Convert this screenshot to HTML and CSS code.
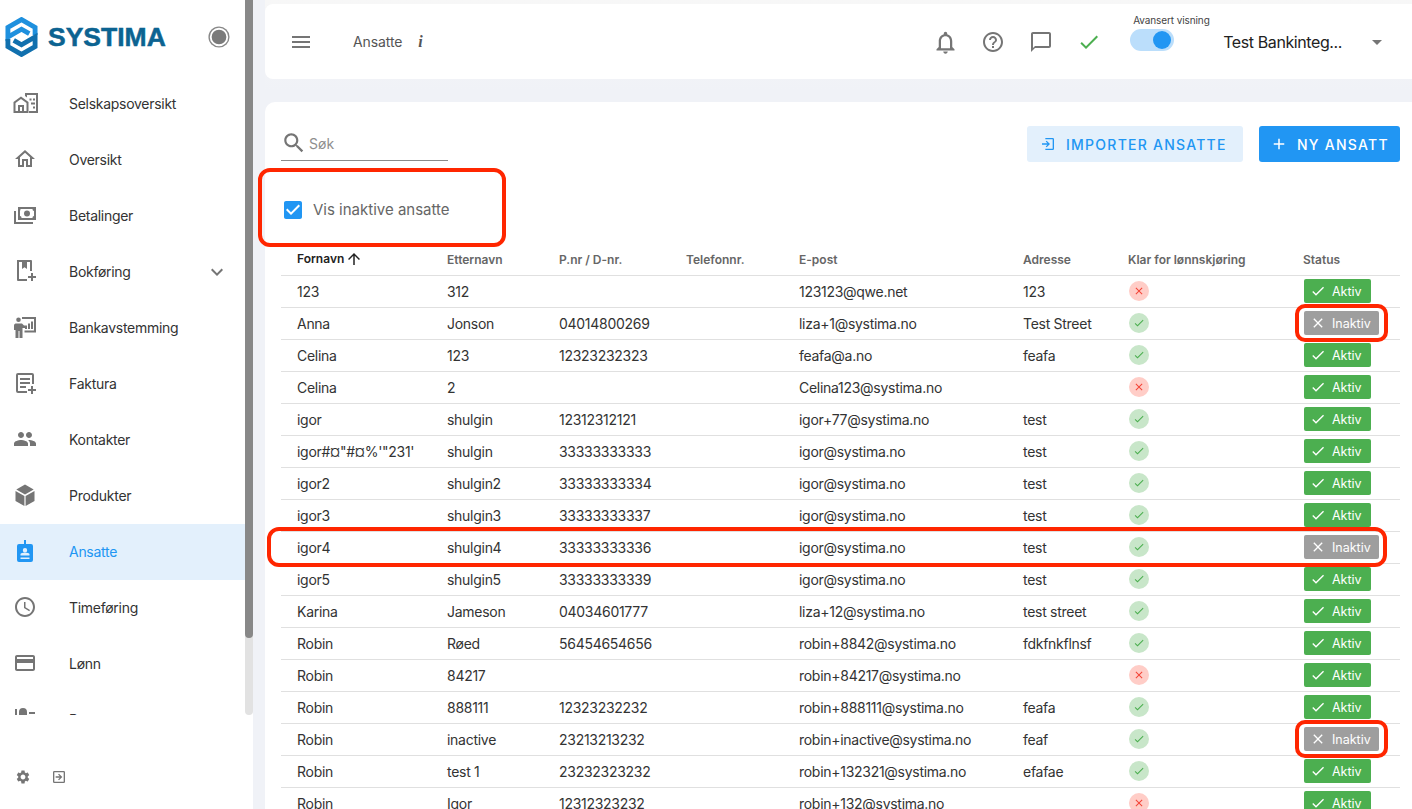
FILE: index.html
```html
<!DOCTYPE html>
<html lang="no">
<head>
<meta charset="utf-8">
<title>Systima – Ansatte</title>
<link rel="stylesheet" href="styles.css">
</head>
<body>
<svg class="sprite" aria-hidden="true">
  <symbol id="i-home" viewBox="0 0 24 24"><path d="M12 5.69l5 4.5V18h-2v-6H9v6H7v-7.81l5-4.5M12 3L2 12h3v8h6v-6h2v6h6v-8h3L12 3z"/></symbol>
  <symbol id="i-company" viewBox="0 0 26 24"><path d="M12 2h13v20h-9v-2h7V4H14v2.500l-2-1.400zM16.500 7.500h2v2h-2zM20 7.500h2v2h-2zM18 11.500h2v2h-2zM20 11.500h2v2h-2zM20 15.500h2v2h-2z"/><path d="M8 5.500l7.500 5.500v11H.5V11zM8 8l-5.500 4v8H5v-6h6v6h2.500v-8zM7 16v4h2v-4z" fill-rule="evenodd"/></symbol>
  <symbol id="i-money" viewBox="0 0 24 24"><path d="M5 4h18v13H5zM7.500 6C7.500 7.500 6.800 8 7 8v5c1 0 1.500.8 1.500 2h11c0-1.200.5-2 1.500-2V8c-1 0-1.500-.8-1.500-2zM14 7.500a3 3 0 1 1 0 6 3 3 0 0 1 0-6zM1 8h2v11h17v2H1z" fill-rule="evenodd"/></symbol>
  <symbol id="i-book" viewBox="0 0 24 24"><path d="M4 1h14a1 1 0 0 1 1 1v10h-2V3h-3v7l-2.500-1.800L9 10V3H6v17h8v2H5a1 1 0 0 1-1-1zM18 14h2v3h3v2h-3v3h-2v-3h-3v-2h3z"/></symbol>
  <symbol id="i-bank" viewBox="0 0 24 24"><path d="M5.500 2.500a2.300 2.300 0 1 1 0 4.600 2.300 2.300 0 0 1 0-4.600zM2.500 8.500H9l2 2h2.500v2.500H9.500v10H6.500v-7h-1v7h-3v-8H1v-4.500a2 2 0 0 1 1.500-2zM9 2h14v15.500H11.500v-2H21V4H9zM12 10.500h2V14h-2zM15 8.500h2V14h-2zM18 6.500h2V14h-2z"/></symbol>
  <symbol id="i-invoice" viewBox="0 0 24 24"><path d="M5 2h14a2 2 0 0 1 2 2v9h-2V4H5v16h9v2H5a2 2 0 0 1-2-2V4a2 2 0 0 1 2-2zM7 7h10v2H7zM7 11h10v2H7zM7 15h6v2H7zM18 15h2v3h3v2h-3v3h-2v-3h-3v-2h3z"/></symbol>
  <symbol id="i-people" viewBox="0 0 24 24"><path d="M16 11c1.660 0 2.990-1.340 2.990-3S17.660 5 16 5c-1.660 0-3 1.340-3 3s1.340 3 3 3zm-8 0c1.660 0 2.990-1.340 2.990-3S9.660 5 8 5C6.340 5 5 6.340 5 8s1.340 3 3 3zm0 2c-2.330 0-7 1.170-7 3.500V19h14v-2.500c0-2.330-4.670-3.500-7-3.500zm8 0c-.29 0-.62.02-.97.05 1.160.84 1.970 1.970 1.970 3.450V19h6v-2.500c0-2.330-4.670-3.500-7-3.500z"/></symbol>
  <symbol id="i-box" viewBox="0 0 24 24"><path d="M12 1.500l8.700 5-8.700 5-8.700-5zM2.500 8l8.900 5.100V23l-8.900-5.100zM21.500 8l-8.900 5.100V23l8.900-5.100z"/></symbol>
  <symbol id="i-badge" viewBox="0 0 24 24"><path d="M11 1h2v4h5a2 2 0 0 1 2 2v14a2 2 0 0 1-2 2H6a2 2 0 0 1-2-2V7a2 2 0 0 1 2-2h5zM12 9a2.200 2.200 0 1 0 0 4.400A2.200 2.200 0 0 0 12 9zM7.500 15v1.500h9V15c0-.9-2.500-1.200-4.500-1.200S7.500 14.100 7.500 15zM7.500 18.500v1.500h9v-1.500z" fill-rule="evenodd"/></symbol>
  <symbol id="i-clock" viewBox="0 0 24 24"><path d="M11.990 2C6.470 2 2 6.480 2 12s4.470 10 9.990 10C17.520 22 22 17.520 22 12S17.520 2 11.990 2zM12 20c-4.420 0-8-3.580-8-8s3.580-8 8-8 8 3.580 8 8-3.580 8-8 8zm.5-13H11v6l5.250 3.150.75-1.230-4.500-2.670z"/></symbol>
  <symbol id="i-card" viewBox="0 0 24 24"><path d="M20 4H4c-1.110 0-1.990.89-1.990 2L2 18c0 1.110.89 2 2 2h16c1.110 0 2-.89 2-2V6c0-1.110-.89-2-2-2zm0 14H4v-6h16v6zm0-10H4V6h16v2z"/></symbol>
  <symbol id="i-report" viewBox="0 0 24 24"><path d="M2 2h2v8H2zM10 1a4 4 0 0 1 4 4v3H6V5a4 4 0 0 1 4-4zM16 5h6v2h-6z"/></symbol>
  <symbol id="i-gear" viewBox="0 0 24 24"><path d="M19.140 12.940c.04-.3.06-.61.06-.94 0-.32-.02-.64-.07-.94l2.030-1.580c.18-.14.23-.41.12-.61l-1.920-3.320c-.12-.22-.37-.29-.59-.22l-2.390.96c-.5-.38-1.030-.7-1.620-.94l-.36-2.540c-.04-.24-.24-.41-.48-.41h-3.840c-.24 0-.43.17-.47.41l-.36 2.540c-.59.24-1.130.57-1.620.94l-2.390-.96c-.22-.08-.47 0-.59.22L2.740 8.870c-.12.21-.08.47.12.61l2.030 1.580c-.05.3-.09.63-.09.94s.02.64.07.94l-2.030 1.580c-.18.14-.23.41-.12.61l1.920 3.320c.12.22.37.29.59.22l2.390-.96c.5.38 1.030.7 1.620.94l.36 2.540c.05.24.24.41.48.41h3.840c.24 0 .44-.17.47-.41l.36-2.540c.59-.24 1.130-.56 1.620-.94l2.390.96c.22.08.47 0 .59-.22l1.920-3.320c.12-.22.07-.47-.12-.61l-2.010-1.580zM12 15.600c-1.980 0-3.600-1.620-3.600-3.600s1.620-3.600 3.600-3.600 3.600 1.620 3.600 3.600-1.620 3.600-3.600 3.600z"/></symbol>
  <symbol id="i-exit" viewBox="0 0 24 24"><path d="M5 3h14a2 2 0 0 1 2 2v14a2 2 0 0 1-2 2H5a2 2 0 0 1-2-2V5a2 2 0 0 1 2-2zm0 2v14h14V5zM7 11h6.200l-2.600-2.600L12 7l5 5-5 5-1.400-1.400 2.600-2.600H7z" fill-rule="evenodd"/></symbol>
  <symbol id="i-import" viewBox="0 0 24 24"><path d="M8 3h11a2 2 0 0 1 2 2v14a2 2 0 0 1-2 2H8v-2h11V5H8zM3 11h8.200L8.600 8.400 10 7l5 5-5 5-1.400-1.400 2.600-2.600H3z"/></symbol>
  <symbol id="i-menu" viewBox="0 0 24 24"><path d="M3 18h18v-2H3v2zm0-5h18v-2H3v2zm0-7v2h18V6H3z"/></symbol>
  <symbol id="i-bell" viewBox="0 0 24 24"><path d="M12 22c1.100 0 2-.9 2-2h-4c0 1.100.9 2 2 2zm6-6v-5c0-3.070-1.630-5.640-4.500-6.320V4c0-.83-.67-1.500-1.500-1.500s-1.500.67-1.500 1.500v.68C7.640 5.360 6 7.920 6 11v5l-2 2v1h16v-1l-2-2zm-2 1H8v-6c0-2.480 1.510-4.500 4-4.500s4 2.020 4 4.500v6z"/></symbol>
  <symbol id="i-help" viewBox="0 0 24 24"><path d="M11 18h2v-2h-2v2zm1-16C6.480 2 2 6.480 2 12s4.480 10 10 10 10-4.480 10-10S17.520 2 12 2zm0 18c-4.410 0-8-3.590-8-8s3.590-8 8-8 8 3.590 8 8-3.590 8-8 8zm0-14c-2.210 0-4 1.790-4 4h2c0-1.100.9-2 2-2s2 .9 2 2c0 2-3 1.750-3 5h2c0-2.250 3-2.500 3-5 0-2.210-1.790-4-4-4z"/></symbol>
  <symbol id="i-chat" viewBox="0 0 24 24"><path d="M20 2H4c-1.100 0-2 .9-2 2v18l4-4h14c1.100 0 2-.9 2-2V4c0-1.100-.9-2-2-2zm0 14H6l-2 2V4h16v12z"/></symbol>
  <symbol id="i-check" viewBox="0 0 24 24"><path d="M9 16.170L4.830 12l-1.420 1.410L9 19 21 7l-1.410-1.410z"/></symbol>
  <symbol id="i-close" viewBox="0 0 24 24"><path d="M19 6.410L17.590 5 12 10.590 6.410 5 5 6.410 10.590 12 5 17.590 6.410 19 12 13.410 17.590 19 19 17.590 13.410 12z"/></symbol>
  <symbol id="i-up" viewBox="0 0 24 24"><path d="M4 12l1.410 1.410L11 7.830V20h2V7.830l5.580 5.590L20 12l-8-8-8 8z"/></symbol>
  <symbol id="i-add" viewBox="0 0 24 24"><path d="M19 13h-6v6h-2v-6H5v-2h6V5h2v6h6v2z"/></symbol>
  <symbol id="i-more" viewBox="0 0 24 24"><path d="M16.590 8.590L12 13.170 7.410 8.590 6 10l6 6 6-6z"/></symbol>
  <symbol id="i-drop" viewBox="0 0 24 24"><path d="M7 10l5 5 5-5z"/></symbol>
  <symbol id="i-search" viewBox="0 0 24 24"><path d="M15.500 14h-.79l-.28-.27C15.410 12.590 16 11.110 16 9.500 16 5.910 13.090 3 9.500 3S3 5.910 3 9.500 5.910 16 9.500 16c1.610 0 3.090-.59 4.230-1.570l.27.28v.79l5 4.990L20.490 19l-4.990-5zm-6 0C7.010 14 5 11.990 5 9.500S7.010 5 9.500 5 14 7.010 14 9.500 11.990 14 9.500 14z"/></symbol>
  <symbol id="i-box-check" viewBox="0 0 24 24"><path d="M19 3H5c-1.110 0-2 .9-2 2v14c0 1.100.89 2 2 2h14c1.110 0 2-.9 2-2V5c0-1.100-.89-2-2-2zm-9 14l-5-5 1.410-1.410L10 14.170l7.590-7.590L19 8l-9 9z"/></symbol>
</svg>

<div class="app">
  <aside class="sidebar">
    <div class="side-scroll">
      <div class="side-content">
        <div class="brand">
          <svg class="logo-mark" viewBox="0 0 34 40">
            <path class="logo-a" d="M31 18V10L17 2 3 10V20L17 12 25 16.500"/>
            <path class="logo-b" d="M3 22V30L17 38 31 30V20L17 28 9 23.500"/>
          </svg>
          <span class="logo-text">SYSTIMA</span>
          <span class="radio-dot"></span>
        </div>
        <nav class="nav">
          <a class="nav-item"><svg class="nav-icon wide"><use href="#i-company"/></svg><span>Selskapsoversikt</span></a>
          <a class="nav-item"><svg class="nav-icon"><use href="#i-home"/></svg><span>Oversikt</span></a>
          <a class="nav-item"><svg class="nav-icon"><use href="#i-money"/></svg><span>Betalinger</span></a>
          <a class="nav-item"><svg class="nav-icon"><use href="#i-book"/></svg><span>Bokføring</span><svg class="nav-chevron"><use href="#i-more"/></svg></a>
          <a class="nav-item"><svg class="nav-icon"><use href="#i-bank"/></svg><span>Bankavstemming</span></a>
          <a class="nav-item"><svg class="nav-icon"><use href="#i-invoice"/></svg><span>Faktura</span></a>
          <a class="nav-item"><svg class="nav-icon"><use href="#i-people"/></svg><span>Kontakter</span></a>
          <a class="nav-item"><svg class="nav-icon"><use href="#i-box"/></svg><span>Produkter</span></a>
          <a class="nav-item active"><svg class="nav-icon"><use href="#i-badge"/></svg><span>Ansatte</span></a>
          <a class="nav-item"><svg class="nav-icon"><use href="#i-clock"/></svg><span>Timeføring</span></a>
          <a class="nav-item"><svg class="nav-icon"><use href="#i-card"/></svg><span>Lønn</span></a>
          <a class="nav-item"><svg class="nav-icon"><use href="#i-report"/></svg><span>Rapporter</span></a>
        </nav>
      </div>
      <div class="scrollbar"><div class="scroll-thumb"></div></div>
    </div>
    <div class="side-foot">
      <svg class="foot-gear"><use href="#i-gear"/></svg>
      <svg class="foot-exit"><use href="#i-exit"/></svg>
    </div>
  </aside>

  <main class="main">
    <header class="topbar">
      <svg class="menu-icon"><use href="#i-menu"/></svg>
      <span class="page-title">Ansatte</span>
      <span class="info-i">i</span>
      <div class="top-actions">
        <svg class="top-icon bell"><use href="#i-bell"/></svg>
        <svg class="top-icon"><use href="#i-help"/></svg>
        <svg class="top-icon"><use href="#i-chat"/></svg>
        <svg class="top-icon ok"><use href="#i-check"/></svg>
      </div>
      <div class="adv">
        <span class="adv-label">Avansert visning</span>
        <span class="switch"><span class="switch-knob"></span></span>
      </div>
      <span class="company">Test Bankinteg...</span>
      <svg class="company-drop"><use href="#i-drop"/></svg>
    </header>

    <section class="card">
      <div class="tools">
        <div class="search">
          <svg class="search-icon"><use href="#i-search"/></svg>
          <span class="search-text">Søk</span>
        </div>
        <div class="buttons">
          <button class="btn btn-soft"><svg class="btn-icon"><use href="#i-import"/></svg>IMPORTER ANSATTE</button>
          <button class="btn btn-solid"><svg class="btn-icon"><use href="#i-add"/></svg>NY ANSATT</button>
        </div>
      </div>
      <label class="check-row">
        <svg class="checkbox"><use href="#i-box-check"/></svg>
        <span>Vis inaktive ansatte</span>
      </label>
      <table class="table">
        <colgroup>
          <col class="c1"><col class="c2"><col class="c3"><col class="c4"><col class="c5"><col class="c6"><col class="c7"><col class="c8">
        </colgroup>
        <thead>
          <tr>
            <th class="sorted">Fornavn<svg class="sort-icon"><use href="#i-up"/></svg></th>
            <th>Etternavn</th><th>P.nr / D-nr.</th><th>Telefonnr.</th><th>E-post</th><th>Adresse</th><th>Klar for lønnskjøring</th><th>Status</th>
          </tr>
        </thead>
        <tbody>
          <tr><td>123</td><td>312</td><td></td><td></td><td>123123@qwe.net</td><td>123</td><td><span class="dot no"><svg><use href="#i-close"/></svg></span></td><td><span class="pill on"><svg><use href="#i-check"/></svg>Aktiv</span></td></tr>
          <tr><td>Anna</td><td>Jonson</td><td>04014800269</td><td></td><td>liza+1@systima.no</td><td>Test Street</td><td><span class="dot yes"><svg><use href="#i-check"/></svg></span></td><td><span class="pill off"><svg><use href="#i-close"/></svg>Inaktiv</span></td></tr>
          <tr><td>Celina</td><td>123</td><td>12323232323</td><td></td><td>feafa@a.no</td><td>feafa</td><td><span class="dot yes"><svg><use href="#i-check"/></svg></span></td><td><span class="pill on"><svg><use href="#i-check"/></svg>Aktiv</span></td></tr>
          <tr><td>Celina</td><td>2</td><td></td><td></td><td>Celina123@systima.no</td><td></td><td><span class="dot no"><svg><use href="#i-close"/></svg></span></td><td><span class="pill on"><svg><use href="#i-check"/></svg>Aktiv</span></td></tr>
          <tr><td>igor</td><td>shulgin</td><td>12312312121</td><td></td><td>igor+77@systima.no</td><td>test</td><td><span class="dot yes"><svg><use href="#i-check"/></svg></span></td><td><span class="pill on"><svg><use href="#i-check"/></svg>Aktiv</span></td></tr>
          <tr><td>igor#¤"#¤%'"231'</td><td>shulgin</td><td>33333333333</td><td></td><td>igor@systima.no</td><td>test</td><td><span class="dot yes"><svg><use href="#i-check"/></svg></span></td><td><span class="pill on"><svg><use href="#i-check"/></svg>Aktiv</span></td></tr>
          <tr><td>igor2</td><td>shulgin2</td><td>33333333334</td><td></td><td>igor@systima.no</td><td>test</td><td><span class="dot yes"><svg><use href="#i-check"/></svg></span></td><td><span class="pill on"><svg><use href="#i-check"/></svg>Aktiv</span></td></tr>
          <tr><td>igor3</td><td>shulgin3</td><td>33333333337</td><td></td><td>igor@systima.no</td><td>test</td><td><span class="dot yes"><svg><use href="#i-check"/></svg></span></td><td><span class="pill on"><svg><use href="#i-check"/></svg>Aktiv</span></td></tr>
          <tr><td>igor4</td><td>shulgin4</td><td>33333333336</td><td></td><td>igor@systima.no</td><td>test</td><td><span class="dot yes"><svg><use href="#i-check"/></svg></span></td><td><span class="pill off"><svg><use href="#i-close"/></svg>Inaktiv</span></td></tr>
          <tr><td>igor5</td><td>shulgin5</td><td>33333333339</td><td></td><td>igor@systima.no</td><td>test</td><td><span class="dot yes"><svg><use href="#i-check"/></svg></span></td><td><span class="pill on"><svg><use href="#i-check"/></svg>Aktiv</span></td></tr>
          <tr><td>Karina</td><td>Jameson</td><td>04034601777</td><td></td><td>liza+12@systima.no</td><td>test street</td><td><span class="dot yes"><svg><use href="#i-check"/></svg></span></td><td><span class="pill on"><svg><use href="#i-check"/></svg>Aktiv</span></td></tr>
          <tr><td>Robin</td><td>Røed</td><td>56454654656</td><td></td><td>robin+8842@systima.no</td><td>fdkfnkflnsf</td><td><span class="dot yes"><svg><use href="#i-check"/></svg></span></td><td><span class="pill on"><svg><use href="#i-check"/></svg>Aktiv</span></td></tr>
          <tr><td>Robin</td><td>84217</td><td></td><td></td><td>robin+84217@systima.no</td><td></td><td><span class="dot no"><svg><use href="#i-close"/></svg></span></td><td><span class="pill on"><svg><use href="#i-check"/></svg>Aktiv</span></td></tr>
          <tr><td>Robin</td><td>888111</td><td>12323232232</td><td></td><td>robin+888111@systima.no</td><td>feafa</td><td><span class="dot yes"><svg><use href="#i-check"/></svg></span></td><td><span class="pill on"><svg><use href="#i-check"/></svg>Aktiv</span></td></tr>
          <tr><td>Robin</td><td>inactive</td><td>23213213232</td><td></td><td>robin+inactive@systima.no</td><td>feaf</td><td><span class="dot yes"><svg><use href="#i-check"/></svg></span></td><td><span class="pill off"><svg><use href="#i-close"/></svg>Inaktiv</span></td></tr>
          <tr><td>Robin</td><td>test 1</td><td>23232323232</td><td></td><td>robin+132321@systima.no</td><td>efafae</td><td><span class="dot yes"><svg><use href="#i-check"/></svg></span></td><td><span class="pill on"><svg><use href="#i-check"/></svg>Aktiv</span></td></tr>
          <tr><td>Robin</td><td>Igor</td><td>12312323232</td><td></td><td>robin+132@systima.no</td><td></td><td><span class="dot no"><svg><use href="#i-close"/></svg></span></td><td><span class="pill on"><svg><use href="#i-check"/></svg>Aktiv</span></td></tr>
        </tbody>
      </table>
    </section>
  </main>

  <div class="mark mark-check"></div>
  <div class="mark mark-row"></div>
  <div class="mark mark-pill-a"></div>
  <div class="mark mark-pill-b"></div>
</div>
</body>
</html>
```
FILE: styles.css
```css
* { box-sizing: border-box; }
html, body { margin: 0; height: 100%; overflow: hidden; }
body {
  background: #f0f2f7;
  font-family: "Inter", "Liberation Sans", sans-serif;
  font-size: 14px;
  letter-spacing: -0.28px;
  color: #333;
}
.sprite { display: none; }
svg { fill: currentColor; display: block; flex: none; }

.app { position: relative; display: flex; gap: 12px; height: 809px; overflow: hidden; }

/* Sidebar */
.sidebar { width: 253px; flex: none; background: #fff; display: flex; flex-direction: column; }
.side-scroll { height: 715px; display: flex; overflow: hidden; flex: none; }
.side-content { width: 245px; flex: none; }
.scrollbar { width: 8px; flex: none; background: #e2e2e2; border-radius: 0 0 4px 4px; }
.scroll-thumb { height: 638px; background: #888; border-radius: 0 0 4px 4px; }

.brand { height: 76px; display: flex; align-items: center; padding: 0 0 2px 5px; }
.logo-mark { width: 33px; height: 40px; }
.logo-a, .logo-b { fill: none; stroke-width: 5; stroke-linejoin: miter; }
.logo-a { stroke: #1e90de; }
.logo-b { stroke: #1170ae; }
.logo-text {
  margin-left: 10px;
  font-family: "Liberation Sans", sans-serif;
  font-weight: 700;
  font-size: 26.5px;
  letter-spacing: 0;
  color: #0c6391;
  -webkit-text-stroke: 0.5px #0c6391;
}
.radio-dot {
  margin-left: auto;
  margin-right: 16px;
  width: 20px;
  height: 20px;
  border-radius: 50%;
  background: #7b7b7b;
  border: 2px solid #fff;
  box-shadow: 0 0 0 1.5px #888;
  transform: scale(.92);
}

.nav-item { height: 56px; display: flex; align-items: center; padding: 0 0 2px 13px; color: #333; position: relative; }
.nav-icon { width: 24px; height: 24px; color: #757575; margin-right: 32px; }
.nav-icon.wide { width: 26px; height: 26px; margin-right: 30px; }
.nav-chevron { width: 24px; height: 24px; color: #757575; position: absolute; right: 16px; top: 16px; }
.nav-item.active { background: #e3f0fc; color: #2196f3; }
.nav-item.active .nav-icon { color: #2196f3; }

.side-foot { flex: 1; display: flex; align-items: flex-start; padding: 54px 0 0 15px; gap: 20px; color: #757575; }
.foot-gear { width: 16px; height: 16px; }
.foot-exit { width: 16px; height: 16px; }

/* Main */
.main { flex: 1; min-width: 0; padding-top: 4px; display: flex; flex-direction: column; gap: 23px; background: linear-gradient(#f7f7f7 0, #f0f2f7 90px); }
.topbar { height: 75px; flex: none; background: #fff; border-radius: 8px 0 0 8px; display: flex; align-items: center; padding-left: 24px; }
.menu-icon { width: 24px; height: 24px; color: #757575; margin-right: 40px; }
.page-title { color: #555; font-size: 14px; letter-spacing: -0.1px; }
.info-i { margin-left: 16px; font-family: "Liberation Serif", serif; font-style: italic; font-weight: 700; font-size: 16px; color: #555; }
.top-actions { margin-left: auto; display: flex; gap: 24px; color: #757575; }
.top-icon { width: 24px; height: 24px; }
.top-icon.bell { width: 27px; height: 27px; margin: -1px -1.5px -2px; }
.top-icon.ok { color: #4caf50; }
.adv { width: 80px; margin: -18px 0 0 29px; display: flex; flex-direction: column; align-items: flex-start; gap: 3px; }
.adv-label { font-size: 10px; color: #444; white-space: nowrap; margin-left: 3px; letter-spacing: -0.1px; }
.switch { width: 44px; height: 22px; border-radius: 11px; background: #bbdefb; display: flex; align-items: center; justify-content: flex-end; padding-right: 3px; }
.switch-knob { width: 18px; height: 18px; border-radius: 50%; background: #2196f3; }
.company { margin-left: 13px; font-size: 16px; letter-spacing: -0.4px; color: #222; white-space: nowrap; }
.company-drop { width: 24px; height: 24px; color: #757575; margin: 0 23px 0 23px; }

.card { flex: 1; background: #fff; border-radius: 10px 0 0 0; padding: 24px 12px 0 16px; min-height: 0; }
.tools { display: flex; justify-content: space-between; height: 36px; }
.search { width: 167px; height: 35px; border-bottom: 1px solid #8a8a8a; display: flex; align-items: center; gap: 2px; }
.search-icon { width: 26px; height: 26px; color: #757575; }
.search-text { color: #8e8e8e; letter-spacing: 0; }
.buttons { display: flex; gap: 16px; }
.btn { height: 36px; border: 0; border-radius: 3px; display: flex; align-items: center; white-space: nowrap; font: 500 14px "Inter", sans-serif; letter-spacing: 1.25px; padding: 0 0 0 13px; }
.btn-soft { background: #e3f0fc; color: #2196f3; width: 216px; }
.btn-solid { background: #2196f3; color: #fff; width: 141px; padding-left: 11px; }
.btn-icon { width: 16px; height: 16px; margin-right: 10px; }
.btn-solid .btn-icon { width: 18px; height: 18px; margin-right: 9px; }

.check-row { display: flex; align-items: center; height: 36px; margin-top: 30px; color: #666; font-size: 15px; letter-spacing: 0; padding-bottom: 1px; }
.checkbox { width: 24px; height: 24px; color: #2196f3; margin: 0 8px 0 0; }

.table { width: 1119px; margin-top: 15px; border-collapse: collapse; table-layout: fixed; }
.c1 { width: 150px; } .c2 { width: 112px; } .c3 { width: 127px; } .c4 { width: 113px; }
.c5 { width: 224px; } .c6 { width: 105px; } .c7 { width: 175px; } .c8 { width: 113px; }
.table th { height: 32px; padding: 1px 0 0 16px; text-align: left; font-size: 12px; font-weight: 600; letter-spacing: 0; color: #666; white-space: nowrap; border-bottom: 1px solid #e0e0e0; }
.table th.sorted { color: #222; }
.sort-icon { display: inline-block; width: 18px; height: 18px; vertical-align: -5px; margin-left: 1px; }
.table td { height: 32px; padding: 0 0 0 16px; font-size: 14px; color: #333; white-space: nowrap; border-bottom: 1px solid #e0e0e0; }

.dot { width: 20px; height: 20px; border-radius: 50%; margin-left: 1px; display: flex; align-items: center; justify-content: center; }
.dot svg { width: 12px; height: 12px; }
.dot.yes { background: #c8e6c9; color: #4caf50; }
.dot.no { background: #ffcdc7; color: #f44336; }

.pill { height: 24px; border-radius: 2px; margin-left: 1px; display: inline-flex; align-items: center; color: #fff; font-size: 12.5px; letter-spacing: 0; padding-left: 6px; vertical-align: middle; }
.pill svg { width: 16px; height: 16px; margin-right: 6px; }
.pill.on { width: 67px; background: #4caf50; }
.pill.off { width: 75px; background: #9e9e9e; }

/* Red annotation frames over the screenshot */
.mark { position: absolute; border: 4px solid #ff2600; background: transparent; pointer-events: none; }
.mark-check { left: 258px; top: 168px; width: 248px; height: 79px; border-radius: 12px; }
.mark-row { left: 267px; top: 527px; width: 1120px; height: 40px; border-radius: 12px; }
.mark-pill-a { left: 1295px; top: 304px; width: 93px; height: 38px; border-radius: 10px; }
.mark-pill-b { left: 1295px; top: 720px; width: 93px; height: 38px; border-radius: 10px; }
```
